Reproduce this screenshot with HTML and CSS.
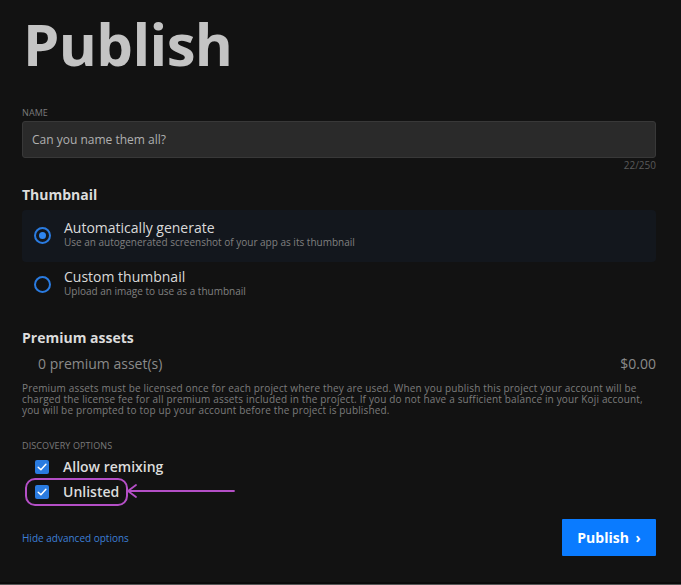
FILE: index.html
```html
<!DOCTYPE html>
<html>
<head>
<meta charset="utf-8">
<link rel="stylesheet" href="styles.css">
</head>
<body>
<div class="page">
  <h1 class="title">Publish</h1>

  <div class="field">
    <div class="label">NAME</div>
    <div class="input">Can you name them all?</div>
    <div class="counter">22/250</div>
  </div>

  <h2 class="section">Thumbnail</h2>
  <div class="options">
    <div class="option selected">
      <span class="radio on"></span>
      <div class="opt-text">
        <div class="opt-title">Automatically generate</div>
        <div class="opt-sub">Use an autogenerated screenshot of your app as its thumbnail</div>
      </div>
    </div>
    <div class="option">
      <span class="radio"></span>
      <div class="opt-text">
        <div class="opt-title">Custom thumbnail</div>
        <div class="opt-sub">Upload an image to use as a thumbnail</div>
      </div>
    </div>
  </div>

  <h2 class="section premium-head">Premium assets</h2>
  <div class="assets">
    <span>0 premium asset(s)</span>
    <span>$0.00</span>
  </div>
  <p class="note">Premium assets must be licensed once for each project where they are used. When you publish this project your account will be charged the license fee for all premium assets included in the project. If you do not have a sufficient balance in your Koji account, you will be prompted to top up your account before the project is published.</p>

  <div class="label disc">DISCOVERY OPTIONS</div>
  <div class="check-row first">
    <span class="checkbox"><svg viewBox="0 0 14 14" width="14" height="14"><path d="M3.2 7.2 L5.9 9.8 L10.9 4.3" fill="none" stroke="#fff" stroke-width="1.5" stroke-linecap="round" stroke-linejoin="round"/></svg></span>
    <span class="check-label">Allow remixing</span>
  </div>
  <div class="check-row unlisted">
    <span class="checkbox"><svg viewBox="0 0 14 14" width="14" height="14"><path d="M3.2 7.2 L5.9 9.8 L10.9 4.3" fill="none" stroke="#fff" stroke-width="1.5" stroke-linecap="round" stroke-linejoin="round"/></svg></span>
    <span class="check-label">Unlisted</span>
    <svg class="annot" viewBox="0 0 110 16" width="110" height="16"><path d="M2 8 L108 8 M2 8 L10 2 M2 8 L10 14" fill="none" stroke="#b44fc6" stroke-width="1.8" stroke-linecap="round"/></svg>
  </div>

  <div class="footer">
    <a class="hide-link">Hide advanced options</a>
    <button class="publish">Publish <span class="chev">›</span></button>
  </div>
</div>
<div class="bottom-edge"></div>
</body>
</html>
```
FILE: styles.css
```css
html, body {
  margin: 0;
  padding: 0;
  background: #121212;
}
body {
  font-family: "Open Sans", "Noto Sans", sans-serif;
  color: #d6d6d6;
  height: 585px;
  position: relative;
  overflow: hidden;
}
.page {
  padding: 0 25px 0 22px;
}
.title {
  margin: 0;
  padding-top: 8px;
  padding-left: 1px;
  font-size: 58px;
  line-height: 72px;
  font-weight: 700;
  color: #c4c4c4;
  letter-spacing: -0.6px;
}
.field {
  margin-top: 27px;
}
.label {
  font-size: 9px;
  color: #7a7a7a;
  line-height: 12px;
  letter-spacing: 0.1px;
}
.input {
  margin-top: 2px;
  height: 37px;
  box-sizing: border-box;
  border: 1px solid #383838;
  border-radius: 3px;
  background: #2a2a2a;
  color: #b0b0b0;
  font-size: 12px;
  line-height: 35px;
  padding-left: 9px;
}
.counter {
  text-align: right;
  font-size: 10px;
  color: #5a5a5a;
  line-height: 14px;
}
.section {
  margin: 0;
  font-size: 14px;
  font-weight: 700;
  color: #dcdcdc;
  line-height: 20px;
}
.field + .section {
  margin-top: 13px;
}
.options {
  margin-top: 5px;
}
.option {
  display: flex;
  align-items: center;
  gap: 13px;
  height: 46px;
  padding-left: 12px;
  border-radius: 4px;
}
.option.selected {
  background: #13171d;
  height: 52px;
}
.radio {
  width: 13px;
  height: 13px;
  border: 2px solid #2a7be0;
  border-radius: 50%;
  flex: none;
  position: relative;
  margin-top: -2px;
}
.radio.on::after {
  content: "";
  position: absolute;
  left: 3px;
  top: 3px;
  width: 7px;
  height: 7px;
  border-radius: 50%;
  background: #2f86f0;
}
.opt-text {
  margin-top: -5px;
}
.opt-title {
  font-size: 14px;
  line-height: 17px;
  color: #dadada;
}
.opt-sub {
  font-size: 10px;
  line-height: 12px;
  color: #808080;
}
.premium-head {
  margin-top: 20px;
}
.assets {
  display: flex;
  justify-content: space-between;
  padding-left: 16px;
  margin-top: 6px;
  font-size: 14px;
  line-height: 20px;
  color: #8a8a8a;
}
.note {
  margin: 9px 0 0;
  font-size: 10px;
  line-height: 11px;
  color: #7c7c7c;
  letter-spacing: 0.16px;
}
.label.disc {
  margin-top: 24px;
}
.check-row {
  display: flex;
  align-items: center;
  gap: 14px;
  height: 25px;
  padding-left: 13px;
  position: relative;
}
.check-row.first {
  margin-top: 2px;
}
.checkbox {
  width: 14px;
  height: 14px;
  background: #2a7be0;
  border-radius: 2px;
  display: flex;
}
.check-label {
  font-size: 14px;
  font-weight: 600;
  color: #dcdcdc;
}
.unlisted::before {
  content: "";
  position: absolute;
  left: 3px;
  top: -1px;
  width: 99px;
  height: 24px;
  border: 2px solid #b44fc6;
  border-radius: 10px;
}
.annot {
  position: absolute;
  left: 104px;
  top: 4px;
}
.footer {
  display: flex;
  justify-content: space-between;
  align-items: center;
  margin-top: 15px;
}
.hide-link {
  font-size: 10px;
  color: #3d7fd6;
}
.publish {
  width: 94px;
  height: 37px;
  border: none;
  border-radius: 1px;
  background: #0a7bff;
  color: #fff;
  font-family: inherit;
  font-size: 14px;
  font-weight: 700;
  padding: 0;
}
.chev {
  margin-left: 3px;
}
.bottom-edge {
  position: absolute;
  left: 0;
  right: 0;
  bottom: 0;
  height: 3px;
  background: #0a0a0a;
  border-bottom: 1px solid #555;
  box-sizing: border-box;
}
```
